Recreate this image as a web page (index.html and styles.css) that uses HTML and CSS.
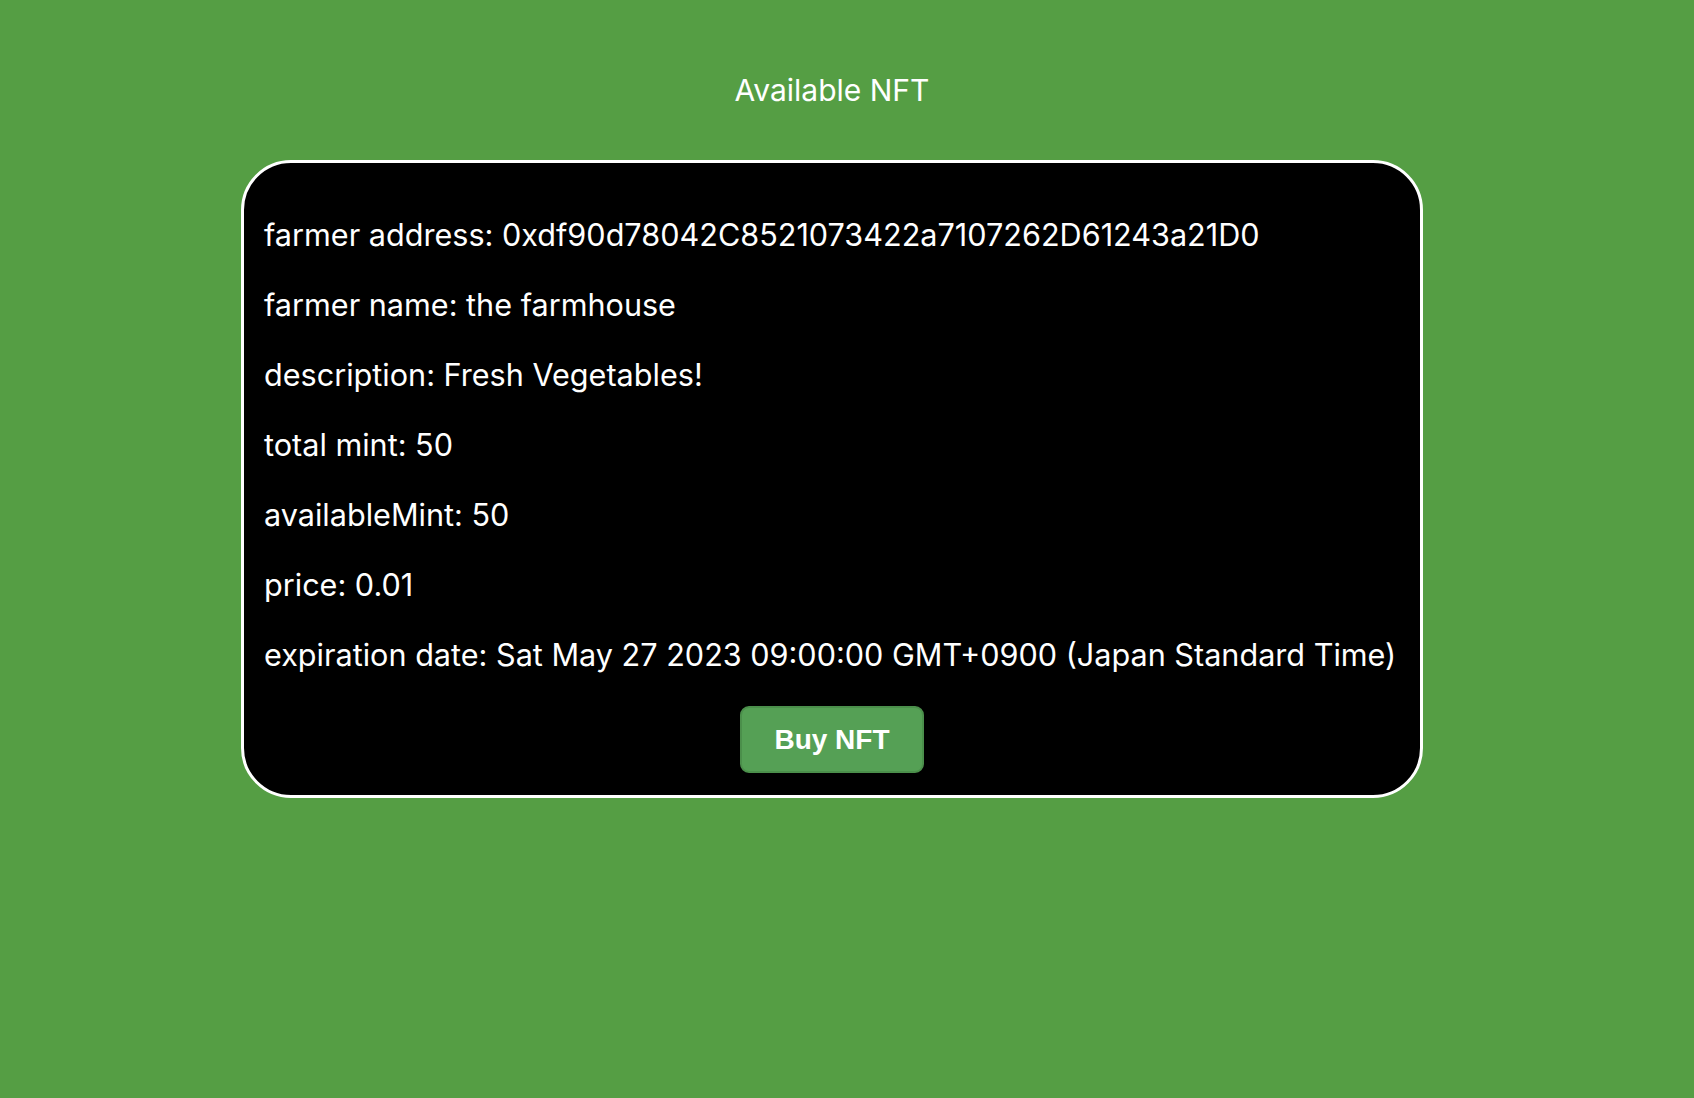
FILE: index.html
```html
<!DOCTYPE html>
<html>
<head>
<meta charset="utf-8">
<link rel="stylesheet" href="styles.css">
</head>
<body>
<div class="page">
  <h1 class="title">Available NFT</h1>
  <div class="card">
    <p class="row">farmer address: 0xdf90d78042C8521073422a7107262D61243a21D0</p>
    <p class="row">farmer name: the farmhouse</p>
    <p class="row">description: Fresh Vegetables!</p>
    <p class="row">total mint: 50</p>
    <p class="row">availableMint: 50</p>
    <p class="row">price: 0.01</p>
    <p class="row">expiration date: Sat May 27 2023 09:00:00 GMT+0900 (Japan Standard Time)</p>
    <div class="actions"><button class="buy">Buy NFT</button></div>
  </div>
</div>
</body>
</html>
```
FILE: styles.css
```css
html, body {
  margin: 0;
  padding: 0;
  background: #559e44;
  height: 100%;
}
body {
  font-family: Inter, "Noto Sans", sans-serif;
  color: #ffffff;
}
.page {
  width: 1664px;
  display: flex;
  flex-direction: column;
  align-items: center;
  padding-top: 70px;
}
.title {
  margin: 0 0 50px 0;
  font-size: 30px;
  font-weight: 400;
  line-height: 40px;
}
.card {
  box-sizing: border-box;
  width: 1182px;
  background: #000000;
  border: 3px solid #ffffff;
  border-radius: 50px;
  padding: 22px 10px 22px 20px;
}
.row {
  margin: 30px 0;
  font-size: 30.6px;
  line-height: 40px;
  white-space: nowrap;
}
.actions {
  display: flex;
  justify-content: center;
  margin-top: 31px;
  margin-right: 10px;
}
.buy {
  box-sizing: border-box;
  width: 184px;
  height: 67px;
  background: #55a055;
  border: 2px solid #4b8f4b;
  border-radius: 9px;
  color: #ffffff;
  font-family: "Liberation Sans", Arial, sans-serif;
  font-weight: 700;
  font-size: 28px;
  padding: 0;
}
```
